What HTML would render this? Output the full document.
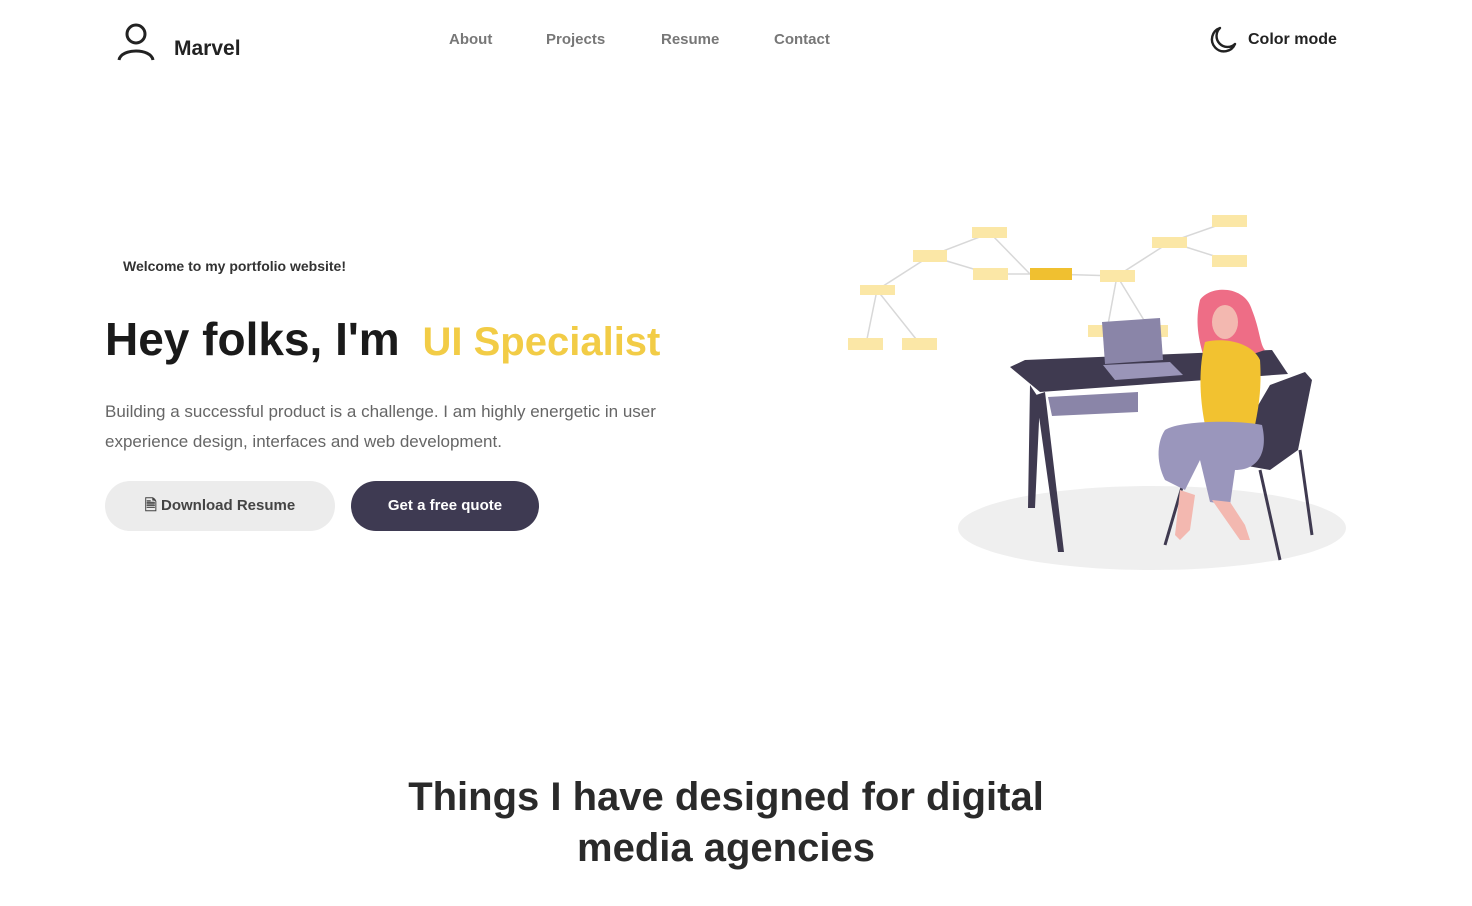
<!DOCTYPE html>
<html><head><meta charset="utf-8"><style>
*{margin:0;padding:0;box-sizing:border-box}
body{width:1472px;height:906px;background:#fff;font-family:"Liberation Sans",sans-serif;position:relative;overflow:hidden;color:#222}
.a{position:absolute;white-space:nowrap}
.nav{font-size:15px;color:#777;font-weight:bold;top:31px}
</style></head><body>
<svg class="a" style="left:116px;top:22px" width="40" height="40" viewBox="0 0 40 40"><circle cx="20" cy="12" r="9" fill="none" stroke="#222" stroke-width="3"/><path d="M3 38 C5 26 35 26 37 38" fill="none" stroke="#222" stroke-width="3"/></svg>
<div class="a" style="left:174px;top:37px;font-size:21px;font-weight:bold;color:#222">Marvel</div>
<div class="a nav" style="left:449px">About</div>
<div class="a nav" style="left:546px">Projects</div>
<div class="a nav" style="left:661px">Resume</div>
<div class="a nav" style="left:774px">Contact</div>
<svg class="a" style="left:1208px;top:25px" width="30" height="30" viewBox="0 0 30 30"><path d="M12 3 A12 12 0 1 0 27 19 A10 10 0 0 1 12 3Z" fill="none" stroke="#222" stroke-width="2.4" stroke-linejoin="round"/></svg>
<div class="a" style="left:1248px;top:31px;font-size:16px;font-weight:bold;color:#222">Color mode</div>
<div class="a" style="left:123px;top:258px;font-size:14px;font-weight:bold;color:#333">Welcome to my portfolio website!</div>
<div class="a" style="left:105px;top:312px;font-size:46px;font-weight:bold;color:#1a1a1a">Hey folks, I'm <span style="color:#f2cc46;font-size:40px;margin-left:10px">UI Specialist</span></div>
<div class="a" style="left:105px;top:397px;font-size:17px;color:#666;line-height:30px;white-space:normal;width:630px">Building a successful product is a challenge. I am highly energetic in user experience design, interfaces and web development.</div>
<div class="a" style="left:105px;top:481px;width:230px;height:50px;border-radius:25px;background:#ececec;font-size:15px;font-weight:bold;color:#444;line-height:50px;text-align:center">🗎 Download Resume</div>
<div class="a" style="left:351px;top:481px;width:188px;height:50px;border-radius:25px;background:#3e3a52;font-size:15px;font-weight:bold;color:#fff;line-height:50px;text-align:center">Get a free quote</div>
<svg class="a" style="left:0;top:0" width="1472" height="906">
<ellipse cx="1152" cy="528" rx="194" ry="42" fill="#efefef"/>
<g stroke="#d8d8d8" stroke-width="1.5" fill="none">
<path d="M877 290 L930 256 L990 233 L1030 274 M930 256 L990 274 L1050 274 L1117 276 L1170 242 L1230 221 M1170 242 L1230 261 M877 290 L866 344 M877 290 L920 344 M1117 276 L1107 330 M1117 276 L1150 330"/></g>
<g fill="#fbe7a6">
<rect x="913" y="250" width="34" height="12"/><rect x="972" y="227" width="35" height="11"/><rect x="973" y="268" width="35" height="12"/><rect x="1100" y="270" width="35" height="12"/><rect x="1152" y="237" width="35" height="11"/><rect x="1212" y="215" width="35" height="12"/><rect x="1212" y="255" width="35" height="12"/><rect x="860" y="285" width="35" height="10"/><rect x="848" y="338" width="35" height="12"/><rect x="902" y="338" width="35" height="12"/><rect x="1088" y="325" width="80" height="12"/></g>
<rect x="1030" y="268" width="42" height="12" fill="#f0c030"/>
<path d="M1048 397 L1138 392 L1138 412 L1052 416Z" fill="#8a85a8"/>
<path d="M1010 367 L1025 360 L1272 350 L1288 374 L1040 392Z" fill="#3f3a50"/>
<path d="M1030 385 L1028 508 L1035 508 L1040 400Z M1036 395 L1058 552 L1064 552 L1045 392Z" fill="#3f3a50"/>
<path d="M1102 322 L1160 318 L1163 360 L1105 364Z" fill="#8a85a8"/>
<path d="M1103 365 L1170 362 L1183 375 L1115 380Z" fill="#9a95b8"/>
<path d="M1270 385 L1305 372 L1312 380 L1298 450 L1270 470 L1225 462Z" fill="#3f3a50"/>
<path d="M1260 470 L1280 560 M1300 450 L1312 535 M1190 460 L1165 545" stroke="#3f3a50" stroke-width="3"/>
<path d="M1200 300 C1210 285 1245 285 1252 310 C1260 330 1260 345 1265 350 L1250 355 L1205 360 C1198 340 1195 320 1200 300Z" fill="#ee6d86"/>
<ellipse cx="1225" cy="322" rx="13" ry="17" fill="#f3b8b0"/>
<path d="M1205 342 C1220 338 1250 340 1260 360 C1262 390 1258 410 1255 425 L1205 425 C1200 400 1198 370 1205 342Z" fill="#f2c230"/>
<path d="M1165 430 C1180 420 1240 420 1262 425 C1268 450 1260 470 1235 470 L1230 505 L1210 502 L1200 460 L1185 490 L1165 480 C1155 460 1158 440 1165 430Z" fill="#9a96bc"/>
<path d="M1180 490 L1195 495 L1190 530 L1180 540 L1175 535Z M1212 500 L1230 502 L1245 525 L1250 540 L1240 540Z" fill="#f3b8b0"/>
</svg>
<div class="a" style="left:0;width:1452px;top:772px;text-align:center;font-size:40px;font-weight:bold;color:#2a2a2a;line-height:51px;white-space:normal">Things I have designed for digital<br>media agencies</div>
</body></html>
